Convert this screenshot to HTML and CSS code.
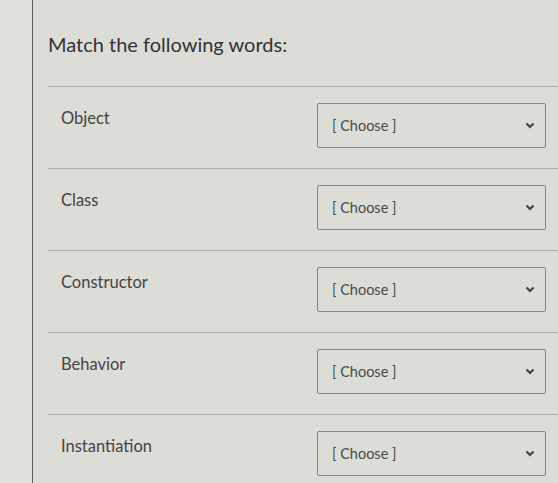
FILE: index.html
```html
<!DOCTYPE html>
<html lang="en">
<head>
  <meta charset="UTF-8" />
  <title>Match the following words</title>
  <link rel="stylesheet" href="styles.css">
</head>
<body>
  <div class="page">
    <div class="gutter"></div>
    <div class="question">
      <h2 class="title">Match the following words:</h2>

      <div class="row">
        <div class="label">Object</div>
        <div class="select"><span>[ Choose ]</span><svg width="10" height="7" viewBox="0 0 10 7"><path d="M1.5 1.5l3.5 3.5 3.5-3.5" fill="none" stroke="#444" stroke-width="2.2"/></svg></div>
      </div>
      <div class="row">
        <div class="label">Class</div>
        <div class="select"><span>[ Choose ]</span><svg width="10" height="7" viewBox="0 0 10 7"><path d="M1.5 1.5l3.5 3.5 3.5-3.5" fill="none" stroke="#444" stroke-width="2.2"/></svg></div>
      </div>
      <div class="row">
        <div class="label">Constructor</div>
        <div class="select"><span>[ Choose ]</span><svg width="10" height="7" viewBox="0 0 10 7"><path d="M1.5 1.5l3.5 3.5 3.5-3.5" fill="none" stroke="#444" stroke-width="2.2"/></svg></div>
      </div>
      <div class="row">
        <div class="label">Behavior</div>
        <div class="select"><span>[ Choose ]</span><svg width="10" height="7" viewBox="0 0 10 7"><path d="M1.5 1.5l3.5 3.5 3.5-3.5" fill="none" stroke="#444" stroke-width="2.2"/></svg></div>
      </div>
      <div class="row">
        <div class="label">Instantiation</div>
        <div class="select"><span>[ Choose ]</span><svg width="10" height="7" viewBox="0 0 10 7"><path d="M1.5 1.5l3.5 3.5 3.5-3.5" fill="none" stroke="#444" stroke-width="2.2"/></svg></div>
      </div>
    </div>
  </div>
</body>
</html>
```
FILE: styles.css
```css
body {
  margin: 0;
  background-color: #dcddd7;
  font-family: Lato, "Open Sans", sans-serif;
  color: #3b3b3b;
}

.page {
  display: flex;
  height: 483px;
  overflow: hidden;
}

.gutter {
  width: 32px;
  flex-shrink: 0;
  background-color: #e2e1db;
  border-right: 1px solid #5c5c58;
}

.question {
  flex: 1;
  padding-left: 15px;
}

.title {
  margin: 32px 0 0 0;
  font-size: 20px;
  font-weight: normal;
  color: #333;
  padding-bottom: 30px;
}

.row {
  display: flex;
  align-items: flex-start;
  border-top: 1px solid #aeaea8;
  padding: 16px 0 20px 0;
}

.label {
  flex: 1;
  padding: 5px 0 0 13px;
  font-size: 16.5px;
  color: #444;
}

.select {
  width: 229px;
  height: 45px;
  margin-right: 12px;
  border: 1px solid #85857f;
  border-radius: 2px;
  display: flex;
  align-items: center;
  justify-content: space-between;
  padding: 0 10px 0 14px;
  box-sizing: border-box;
  font-size: 14.5px;
  color: #4a4a4a;
}
```
